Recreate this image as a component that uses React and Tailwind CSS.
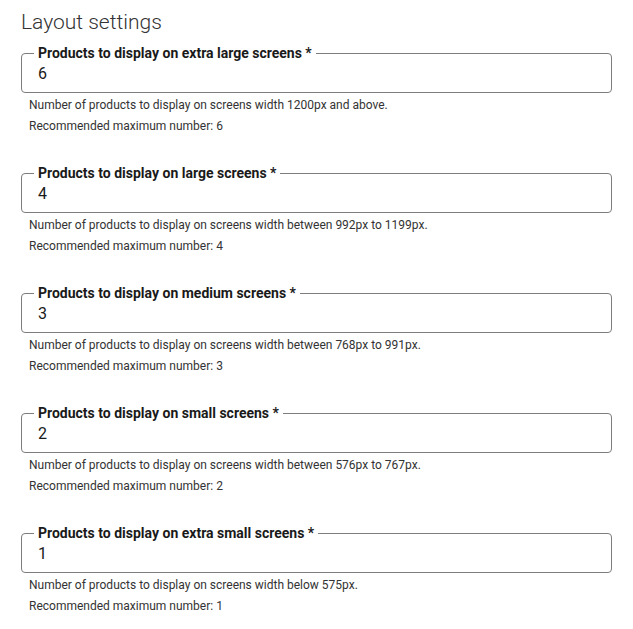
import React from 'react';

const campos = [
  { etiqueta: 'Products to display on extra large screens', valor: '6', ayuda: 'Number of products to display on screens width 1200px and above.' },
  { etiqueta: 'Products to display on large screens', valor: '4', ayuda: 'Number of products to display on screens width between 992px to 1199px.' },
  { etiqueta: 'Products to display on medium screens', valor: '3', ayuda: 'Number of products to display on screens width between 768px to 991px.' },
  { etiqueta: 'Products to display on small screens', valor: '2', ayuda: 'Number of products to display on screens width between 576px to 767px.' },
  { etiqueta: 'Products to display on extra small screens', valor: '1', ayuda: 'Number of products to display on screens width below 575px.' },
];

const Campo = ({ etiqueta, valor, ayuda }) => (
  <div className="mb-[28px]">
    <fieldset className="border border-[#7d7d7d] rounded-[4px] px-[12px] pb-[6px]">
      <legend className="px-[4px] text-[14px] leading-[17px] font-bold text-[#1a1a1a]">
        {etiqueta} *
      </legend>
      <input
        type="text"
        defaultValue={valor}
        className="block w-full pl-[4px] h-[24px] text-[16px] leading-[24px] text-[#1a1a1a] bg-transparent outline-none"
      />
    </fieldset>
    <div className="mt-[2px] pl-[8px] text-[12px] leading-[21px] text-[#333]">
      <div>{ayuda}</div>
      <div>Recommended maximum number: {valor}</div>
    </div>
  </div>
);

const App = () => {
  return (
    <div className="min-h-screen bg-white px-[21px] pt-[8px] font-['Roboto',sans-serif]">
      <h2 className="text-[21px] leading-[28px] font-light text-[#333]">Layout settings</h2>
      <div className="mt-[9px]">
        {campos.map((c) => (
          <Campo key={c.etiqueta} {...c} />
        ))}
      </div>
    </div>
  );
};

export default App;
